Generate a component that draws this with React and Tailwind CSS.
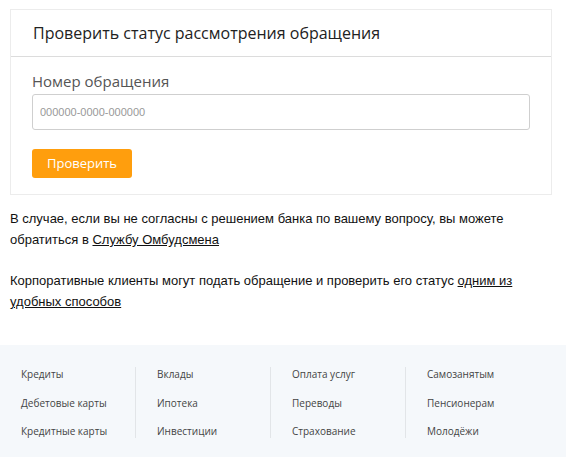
const footerCols = [
  ['Кредиты', 'Дебетовые карты', 'Кредитные карты'],
  ['Вклады', 'Ипотека', 'Инвестиции'],
  ['Оплата услуг', 'Переводы', 'Страхование'],
  ['Самозанятым', 'Пенсионерам', 'Молодёжи'],
];

const App = () => {
  return (
    <div className="w-[566px] bg-white pt-[9px]">
      <div className="ml-[10px] w-[542px] border border-[#ececec]">
        <div className="h-[47px] flex items-center px-[22px] border-b border-[#dcdcdc]">
          <h2 className="text-[16px] text-[#222] font-['Open_Sans',sans-serif]">Проверить статус рассмотрения обращения</h2>
        </div>
        <div className="px-[21px] pt-[13px] pb-[16px]">
          <label className="block text-[15px] leading-[22px] text-[#555] font-['Open_Sans',sans-serif] mb-[2px]">Номер обращения</label>
          <input
            type="text"
            placeholder="000000-0000-000000"
            className="w-full h-[36px] px-[7px] border border-[#cfcfcf] rounded-[3px] text-[11px] font-['Liberation_Sans',Arial,sans-serif] placeholder:text-[#999] outline-none"
          />
          <button
            type="button"
            className="mt-[19px] h-[29px] px-[15px] rounded-[3px] bg-[#ff9e0d] text-white text-[13px] font-['Open_Sans',sans-serif]"
          >
            Проверить
          </button>
        </div>
      </div>

      <div className="px-[10px] pt-[13px] text-[13px] leading-[21px] text-[#111] font-['Liberation_Sans',Arial,sans-serif]">
        <p className="pr-[40px]">
          В случае, если вы не согласны с решением банка по вашему вопросу, вы можете обратиться в{' '}
          <a href="#" className="underline">Службу Омбудсмена</a>
        </p>
        <p className="mt-[20px] pr-[40px]">
          Корпоративные клиенты могут подать обращение и проверить его статус{' '}
          <a href="#" className="underline">одним из удобных способов</a>
        </p>
      </div>

      <div className="mt-[33px] bg-[#f5f8fb] pt-[22px] pb-[19px] flex">
        {footerCols.map((col, i) => (
          <div
            key={i}
            className={`w-[135px] pl-[21px] flex flex-col gap-[14.5px] ${i > 0 ? 'border-l border-[#e2e5e8]' : ''}`}
          >
            {col.map((item) => (
              <a key={item} href="#" className="text-[10px] leading-[14px] text-[#444] font-['Open_Sans',sans-serif]">
                {item}
              </a>
            ))}
          </div>
        ))}
      </div>
    </div>
  );
};

export default App;
